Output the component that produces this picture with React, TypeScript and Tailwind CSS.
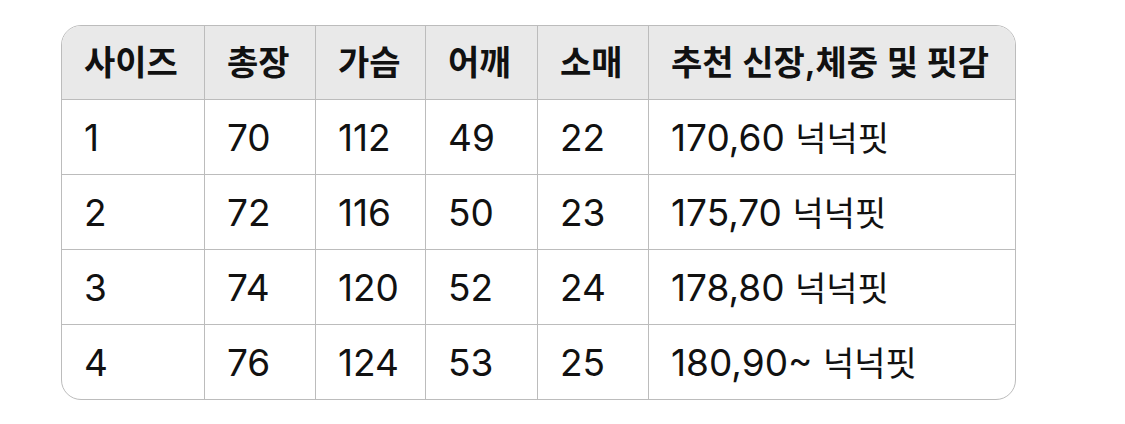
const HEADERS = ["사이즈", "총장", "가슴", "어깨", "소매", "추천 신장,체중 및 핏감"];

const ROWS = [
  ["1", "70", "112", "49", "22", "170,60 넉넉핏"],
  ["2", "72", "116", "50", "23", "175,70 넉넉핏"],
  ["3", "74", "120", "52", "24", "178,80 넉넉핏"],
  ["4", "76", "124", "53", "25", "180,90~ 넉넉핏"],
];

// digits are set a little larger than hangul so the two scripts sit like the original
function Cell({ text }: { text: string }) {
  const parts = text.split(/([가-힣]+)/).filter(Boolean);
  return (
    <>
      {parts.map((p, i) =>
        /[가-힣]/.test(p) ? (
          <span key={i} className="text-[34px]">{p}</span>
        ) : (
          <span key={i} className="text-[37px] whitespace-pre">{p}</span>
        )
      )}
    </>
  );
}

export default function App() {
  return (
    <div
      className="w-[1125px] h-[424px] bg-white pt-[25px] pl-[61px] text-[#111111]"
      style={{ fontFamily: 'Inter, "Noto Sans CJK KR", sans-serif' }}
    >
      <div className="w-[955px] rounded-[20px] border border-[#bcbcbc] overflow-hidden">
        <div className="grid grid-cols-[142px_111px_110px_112px_111px_1fr] bg-[#e9e9e9] h-[73px]">
          {HEADERS.map((h, i) => (
            <div
              key={h}
              className={
                "flex items-center pl-[22px] text-[34px] font-semibold leading-none " +
                (i > 0 ? "border-l border-[#bcbcbc]" : "")
              }
            >
              {h}
            </div>
          ))}
        </div>
        {ROWS.map((row) => (
          <div
            key={row[0]}
            className="grid grid-cols-[142px_111px_110px_112px_111px_1fr] h-[75px] border-t border-[#bcbcbc]"
          >
            {row.map((cell, i) => (
              <div
                key={i}
                className={
                  "flex items-center pl-[22px] leading-none " +
                  (i > 0 ? "border-l border-[#bcbcbc]" : "")
                }
              >
                <div className="flex items-baseline">
                  <Cell text={cell} />
                </div>
              </div>
            ))}
          </div>
        ))}
      </div>
    </div>
  );
}
